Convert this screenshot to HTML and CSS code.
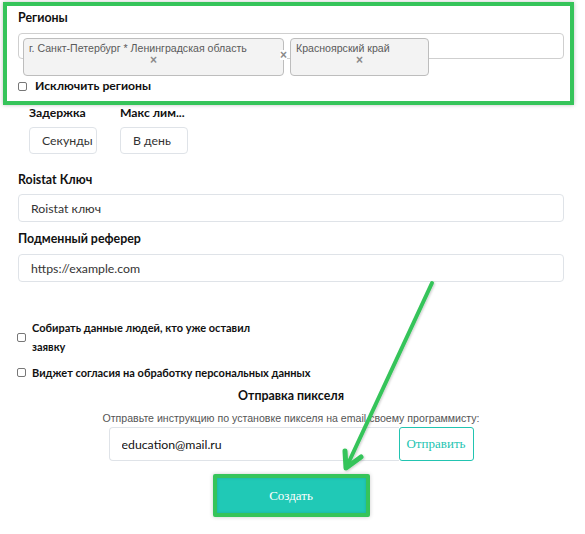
FILE: index.html
```html
<!DOCTYPE html>
<html lang="ru">
<head>
    <meta charset="UTF-8">
    <meta name="viewport" content="width=device-width, initial-scale=1.0">
    <title>Создание пикселя</title>
    <link rel="stylesheet" href="styles.css">
</head>
<body>
    <div class="page">
        <div class="regions-box">
            <div class="field-label">Регионы</div>
            <div class="select">
                <span class="chip chip-wide">
                    г. Санкт-Петербург * Ленинградская область
                    <span class="chip-x">×</span>
                    <span class="chip-edge-x">×</span>
                </span>
                <span class="chip chip-narrow">
                    Красноярский край
                    <span class="chip-x">×</span>
                </span>
            </div>
            <label class="check check-exclude"><input type="checkbox"> Исключить регионы</label>
        </div>

        <div class="limits">
            <div class="limit">
                <div class="limit-label">Задержка</div>
                <input class="limit-input" type="text" placeholder="Секунды">
            </div>
            <div class="limit">
                <div class="limit-label">Макс лим...</div>
                <input class="limit-input" type="text" placeholder="В день">
            </div>
        </div>

        <div class="field-label label-roistat">Roistat Ключ</div>
        <input class="text-input" type="text" placeholder="Roistat ключ">

        <div class="field-label label-referer">Подменный реферер</div>
        <input class="text-input" type="text" placeholder="https://example.com">

        <label class="check check-collect"><input type="checkbox"> <span class="check-text">Собирать данные людей, кто уже оставил заявку</span></label>
        <label class="check check-widget"><input type="checkbox"> <span class="check-text">Виджет согласия на обработку персональных данных</span></label>

        <div class="pixel">
            <div class="pixel-title">Отправка пикселя</div>
            <div class="pixel-hint">Отправьте инструкцию по установке пикселя на email своему программисту:</div>
            <div class="email-group">
                <input class="email-input" type="text" value="education@mail.ru">
                <button class="send-btn">Отправить</button>
            </div>
            <div class="create-wrap">
                <button class="create-btn">Создать</button>
            </div>
        </div>

        <svg class="arrow" width="585" height="534" viewBox="0 0 585 534">
            <defs>
                <filter id="soft" x="-20%" y="-20%" width="140%" height="140%">
                    <feDropShadow dx="1" dy="1" stdDeviation="1" flood-color="#000" flood-opacity="0.2"/>
                </filter>
            </defs>
            <g filter="url(#soft)" stroke="#36c45a" fill="none" stroke-linecap="round" stroke-linejoin="round">
                <line x1="432" y1="283" x2="347" y2="466" stroke-width="4"/>
                <polyline points="345,451 346,468 361,457" stroke-width="5"/>
            </g>
        </svg>
    </div>
</body>
</html>
```

FILE: styles.css
```css
body {
    margin: 0;
    background: #fff;
    font-family: Lato, "Open Sans", sans-serif;
    color: #111;
}
.page {
    position: relative;
    width: 585px;
    height: 534px;
    overflow: hidden;
}
.regions-box {
    box-sizing: border-box;
    width: 571px;
    margin: 2px 0 0 3px;
    padding: 3px 6px 7px 11px;
    border: 4px solid #36c45a;
    box-shadow: 0 0 4px rgba(0, 0, 0, 0.25);
}
.field-label {
    font-size: 12.4px;
    font-weight: bold;
    line-height: 18px;
}
.regions-box .field-label {
    margin-bottom: 6px;
}
.select {
    box-sizing: border-box;
    height: 26px;
    border: 1px solid #cfcfcf;
    border-radius: 4px;
    display: flex;
    align-items: flex-start;
    gap: 6px;
    padding: 4px 0 0 4px;
}
.chip {
    position: relative;
    box-sizing: border-box;
    flex-shrink: 0;
    height: 38px;
    padding: 2px 5px 0;
    background: #f3f3f3;
    border: 1px solid #bdbdbd;
    border-radius: 4px;
    font-family: "Liberation Sans", Arial, sans-serif;
    font-size: 10.6px;
    line-height: 14px;
    color: #5a5a5a;
}
.chip-wide { width: 261px; }
.chip-narrow { width: 139px; }
.chip-x {
    display: block;
    text-align: center;
    font-size: 12px;
    line-height: 10px;
    font-weight: bold;
    color: #8a8a8a;
}
.chip-edge-x {
    position: absolute;
    right: -4px;
    top: 11px;
    font-size: 12px;
    line-height: 10px;
    font-weight: bold;
    color: #8a8a8a;
    background: #fff;
}
.check {
    display: flex;
    align-items: center;
    font-size: 11px;
    font-weight: bold;
    line-height: 19px;
}
.check input {
    appearance: none;
    -webkit-appearance: none;
    box-sizing: border-box;
    width: 9px;
    height: 9px;
    margin: 0 6px 0 0;
    border: 1px solid #777;
    border-radius: 2px;
    background: #fff;
    flex-shrink: 0;
}
.check-exclude {
    margin-top: 19px;
    font-size: 12.2px;
    line-height: 16px;
}
.check-exclude input {
    margin-right: 8px;
}
.limits {
    display: flex;
    gap: 23px;
    margin-left: 29px;
}
.limit {
    width: 68px;
}
.limit-label {
    font-size: 12.2px;
    font-weight: bold;
    line-height: 16px;
    white-space: nowrap;
    margin-bottom: 6px;
}
.limit-input {
    box-sizing: border-box;
    width: 68px;
    height: 27px;
    padding: 0 2px 0 12px;
    border: 1px solid #dfe3e8;
    border-radius: 4px;
    font-family: inherit;
    font-size: 12.3px;
    outline: none;
}
.limit-input::placeholder,
.text-input::placeholder {
    color: #333;
}
.label-roistat {
    margin: 17px 0 5px 18px;
}
.label-referer {
    margin: 8px 0 6px 18px;
}
.text-input {
    display: block;
    box-sizing: border-box;
    width: 546px;
    height: 28px;
    margin-left: 18px;
    padding: 0 12px;
    border: 1px solid #dfe3e8;
    border-radius: 4px;
    font-family: inherit;
    font-size: 12.3px;
    outline: none;
}
.check-collect {
    margin: 36px 0 0 17px;
}
.check-collect .check-text {
    width: 240px;
}
.check-widget {
    margin: 7px 0 0 17px;
}
.pixel {
    width: 546px;
    margin-left: 18px;
    text-align: center;
}
.pixel-title {
    margin-top: 5px;
    font-size: 12.4px;
    font-weight: bold;
    line-height: 18px;
}
.pixel-hint {
    margin-top: 5px;
    font-family: "Liberation Sans", Arial, sans-serif;
    font-size: 10.6px;
    line-height: 16px;
    color: #555;
}
.email-group {
    display: flex;
    justify-content: center;
    margin-top: 1px;
}
.email-input {
    box-sizing: border-box;
    width: 290px;
    height: 34px;
    padding: 0 12px;
    border: 1px solid #dfe3e8;
    border-right: none;
    border-radius: 4px 0 0 4px;
    font-family: inherit;
    font-size: 12.3px;
    color: #111;
    outline: none;
}
.send-btn {
    box-sizing: border-box;
    width: 75px;
    height: 34px;
    border: 1px solid #22c4b1;
    border-radius: 3px;
    background: #fff;
    color: #22c4b1;
    font-family: "Liberation Serif", "Times New Roman", serif;
    font-size: 13px;
    cursor: pointer;
}
.create-wrap {
    margin-top: 13px;
    display: flex;
    justify-content: center;
}
.create-btn {
    box-sizing: content-box;
    width: 149px;
    height: 35px;
    border: 4px solid #36c45a;
    border-radius: 2px;
    background: #20c9b6;
    color: #fff;
    font-family: "Liberation Serif", "Times New Roman", serif;
    font-size: 13px;
    padding: 0;
    box-shadow: 0 0 4px rgba(0, 0, 0, 0.2), inset 0 0 3px rgba(0, 0, 0, 0.15);
    cursor: pointer;
}
.arrow {
    position: absolute;
    left: 0;
    top: 0;
    pointer-events: none;
}
```
